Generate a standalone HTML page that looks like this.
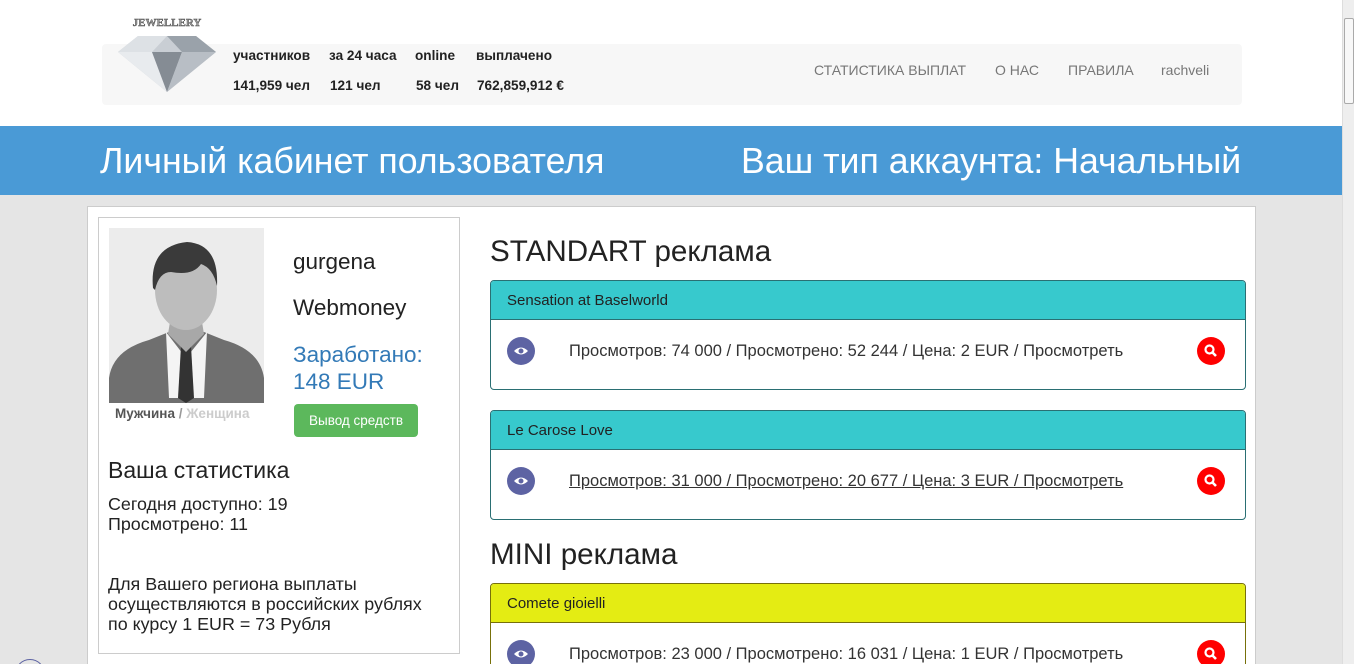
<!DOCTYPE html>
<html><head><meta charset="utf-8"><style>
*{box-sizing:border-box;margin:0;padding:0}
html,body{width:1354px;height:664px;overflow:hidden}
body{background:#e5e5e5;font-family:"Liberation Sans","DejaVu Sans",sans-serif;color:#333;position:relative}
.abs{position:absolute}
.top{left:0;top:0;width:1342px;height:126px;background:#fff}
.navbox{left:102px;top:44px;width:1140px;height:61px;background:#f7f7f7;border-radius:4px}
.st{font-size:13.6px;font-weight:bold;color:#222}
.nav{font-size:14px;color:#777;top:62px}
.band{left:0;top:126px;width:1342px;height:69px;background:#4a9ad6;color:#fff;font-size:35.7px}
.sb{left:1342px;top:0;width:12px;height:664px;background:#eee;border-left:1px solid #ddd}
.main{left:87px;top:206px;width:1169px;height:458px;background:#fff;border:1px solid #ccc;border-bottom:none}
.lp{left:98px;top:217px;width:362px;height:437px;border:1px solid #ccc;background:#fff}
.panel{left:490px;width:756px;height:110px;border:1px solid #2a6f73;border-radius:4px;background:#fff;overflow:hidden}
.ph{height:39px;background:#37c9cd;border-bottom:1px solid #2a6f73;font-size:15px;padding:11px 0 0 16px;color:#222}
.pb{position:relative;height:70px;font-size:16.5px;color:#333}
.eye{position:absolute;left:16px;top:17px;width:28px;height:28px}
.srch{position:absolute;left:706px;top:17px;width:28px;height:28px}
.pt{position:absolute;left:78px;top:22px}
h2{position:absolute;font-weight:normal;font-size:29.6px;color:#222}
.lt{font-size:17.9px;line-height:20px;color:#222}
</style></head><body>
<div class="abs top"></div>
<div class="abs navbox"></div>
<svg class="abs" style="left:114px;top:14px" width="106" height="80" viewBox="0 0 106 80">
<text x="53" y="12" font-size="11" font-family="Liberation Serif" font-weight="bold" text-anchor="middle" fill="#999" stroke="#444" stroke-width=".4">JEWELLERY</text>
<polygon points="4,38 24,22 82,22 102,38 53,78" fill="#c9ced4"/>
<polygon points="24,22 53,22 38,38 4,38" fill="#dde1e5"/>
<polygon points="53,22 82,22 102,38 68,38" fill="#9aa2aa"/>
<polygon points="4,38 38,38 53,78" fill="#e8ebee"/>
<polygon points="38,38 68,38 53,78" fill="#858c94"/>
<polygon points="68,38 102,38 53,78" fill="#b8bec5"/>
</svg>
<div class="abs st" style="left:233px;top:48px">участников</div>
<div class="abs st" style="left:329px;top:48px">за 24 часа</div>
<div class="abs st" style="left:415px;top:48px">online</div>
<div class="abs st" style="left:476px;top:48px">выплачено</div>
<div class="abs st" style="left:233px;top:78px">141,959 чел</div>
<div class="abs st" style="left:330px;top:78px">121 чел</div>
<div class="abs st" style="left:416px;top:78px">58 чел</div>
<div class="abs st" style="left:477px;top:78px">762,859,912 €</div>
<div class="abs nav" style="left:814px">СТАТИСТИКА ВЫПЛАТ</div>
<div class="abs nav" style="left:995px">О НАС</div>
<div class="abs nav" style="left:1068px">ПРАВИЛА</div>
<div class="abs nav" style="left:1161px">rachveli</div>
<div class="abs band"><span class="abs" style="left:100px;top:15px">Личный кабинет пользователя</span><span class="abs" style="left:741px;top:15px">Ваш тип аккаунта: Начальный</span></div>
<div class="abs sb"><div class="abs" style="left:1px;top:18px;width:10px;height:86px;background:#f8f8f8;border:1px solid #aaa;border-radius:2px"></div></div>
<div class="abs main"></div>
<div class="abs lp"></div>
<svg class="abs" style="left:109px;top:228px" width="155" height="175" viewBox="0 0 155 175">
<rect width="155" height="175" fill="#ececec"/>
<path d="M0 175 L0 150 Q4 122 40 112 L60 104 L95 104 L115 112 Q151 122 155 150 L155 175Z" fill="#6f6f6f"/>
<path d="M57 104 L77 130 L98 104 L95 170 L60 170Z" fill="#f4f4f4"/>
<path d="M72 118 L82 118 L85 170 L77 175 L69 170Z" fill="#333"/>
<path d="M62 88 L92 88 L95 106 L77 124 L59 106Z" fill="#a8a8a8"/>
<ellipse cx="77" cy="62" rx="31" ry="40" fill="#bdbdbd"/>
<path d="M44 60 Q40 18 78 14 Q110 16 108 58 Q104 40 92 36 Q84 48 62 44 Q50 44 46 62Z" fill="#3a3a3a"/>
</svg>
<div class="abs" style="left:115px;top:406px;font-size:13.5px;font-weight:bold;color:#555">Мужчина <span style="color:#999">/</span> <span style="color:#ccc">Женщина</span></div>
<div class="abs" style="left:293px;top:249px;font-size:22.5px;color:#222">gurgena</div>
<div class="abs" style="left:293px;top:295px;font-size:22.5px;color:#222">Webmoney</div>
<div class="abs" style="left:293px;top:341px;font-size:22.5px;color:#337ab7;line-height:27px">Заработано:<br>148 EUR</div>
<div class="abs" style="left:294px;top:404px;width:124px;height:33px;background:#5cb85c;border-radius:4px;color:#fff;font-size:13.5px;text-align:center;line-height:33px">Вывод средств</div>
<div class="abs" style="left:108px;top:457px;font-size:23px;color:#222">Ваша статистика</div>
<div class="abs lt" style="left:108px;top:494px">Сегодня доступно: 19<br>Просмотрено: 11</div>
<div class="abs lt" style="left:108px;top:574px">Для Вашего региона выплаты<br>осуществляются в российских рублях<br>по курсу 1 EUR = 73 Рубля</div>
<div class="abs" style="left:15px;top:659px;width:30px;height:30px;border-radius:50%;border:1px solid #5d63a3"></div>
<h2 style="left:490px;top:235px">STANDART реклама</h2>
<div class="abs panel" style="top:280px"><div class="ph">Sensation at Baselworld</div><div class="pb"><svg class="eye" viewBox="0 0 28 28"><circle cx="14" cy="14" r="14" fill="#5d63a3"/><path d="M7 14 Q14 7 21 14 Q14 21 7 14Z" fill="#fff"/><circle cx="14" cy="14" r="2.5" fill="#5d63a3"/></svg><span class="pt">Просмотров: 74 000 / Просмотрено: 52 244 / Цена: 2 EUR / Просмотреть</span><svg class="srch" viewBox="0 0 28 28"><circle cx="14" cy="14" r="14" fill="#f00"/><circle cx="12.5" cy="12.5" r="4" fill="none" stroke="#fff" stroke-width="2.2"/><path d="M15.5 15.5 L19 19" stroke="#fff" stroke-width="2.6"/></svg></div></div>
<div class="abs panel" style="top:410px"><div class="ph">Le Carose Love</div><div class="pb"><svg class="eye" viewBox="0 0 28 28"><circle cx="14" cy="14" r="14" fill="#5d63a3"/><path d="M7 14 Q14 7 21 14 Q14 21 7 14Z" fill="#fff"/><circle cx="14" cy="14" r="2.5" fill="#5d63a3"/></svg><span class="pt" style="text-decoration:underline">Просмотров: 31 000 / Просмотрено: 20 677 / Цена: 3 EUR / Просмотреть</span><svg class="srch" viewBox="0 0 28 28"><circle cx="14" cy="14" r="14" fill="#f00"/><circle cx="12.5" cy="12.5" r="4" fill="none" stroke="#fff" stroke-width="2.2"/><path d="M15.5 15.5 L19 19" stroke="#fff" stroke-width="2.6"/></svg></div></div>
<h2 style="left:490px;top:538px">MINI реклама</h2>
<div class="abs panel" style="top:583px;border-color:#77700a"><div class="ph" style="background:#e4ec13;border-color:#77700a">Comete gioielli</div><div class="pb"><svg class="eye" viewBox="0 0 28 28"><circle cx="14" cy="14" r="14" fill="#5d63a3"/><path d="M7 14 Q14 7 21 14 Q14 21 7 14Z" fill="#fff"/><circle cx="14" cy="14" r="2.5" fill="#5d63a3"/></svg><span class="pt">Просмотров: 23 000 / Просмотрено: 16 031 / Цена: 1 EUR / Просмотреть</span><svg class="srch" viewBox="0 0 28 28"><circle cx="14" cy="14" r="14" fill="#f00"/><circle cx="12.5" cy="12.5" r="4" fill="none" stroke="#fff" stroke-width="2.2"/><path d="M15.5 15.5 L19 19" stroke="#fff" stroke-width="2.6"/></svg></div></div>
</body></html>
